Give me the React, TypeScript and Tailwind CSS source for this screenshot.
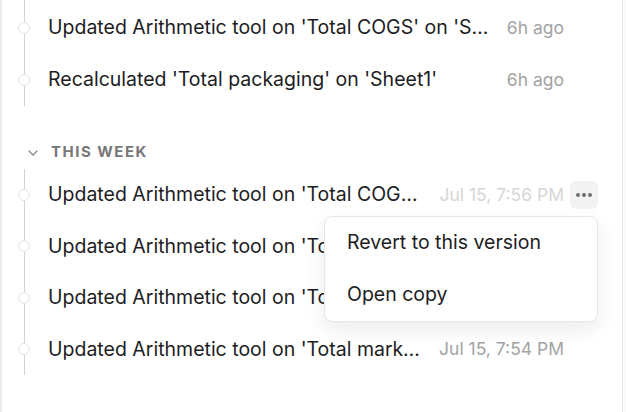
import { ChevronDown } from "lucide-react";

type Entry = { text: string; time: string; active?: boolean };

const today: Entry[] = [
  { text: "Updated Arithmetic tool on 'Total COGS' on 'Sheet1'", time: "6h ago" },
  { text: "Recalculated 'Total packaging' on 'Sheet1'", time: "6h ago" },
];

const thisWeek: Entry[] = [
  { text: "Updated Arithmetic tool on 'Total COGS' on 'Sheet1'", time: "Jul 15, 7:56 PM", active: true },
  { text: "Updated Arithmetic tool on 'Total packaging' on 'Sheet1'", time: "Jul 15, 7:55 PM" },
  { text: "Updated Arithmetic tool on 'Total shipping' on 'Sheet1'", time: "Jul 15, 7:55 PM" },
  { text: "Updated Arithmetic tool on 'Total marketing' on 'Sheet1'", time: "Jul 15, 7:54 PM" },
];

function Row({ entry, height }: { entry: Entry; height: string }) {
  return (
    <li className={`relative flex items-center pl-[23px] pr-6 ${height}`}>
      <span className="absolute -left-[7px] top-1/2 h-3 w-3 -translate-y-1/2 rounded-full border border-[#e3e3e3] bg-white" />
      <span className="min-w-0 flex-1 truncate text-[19.5px] text-[#1d1d1f]">{entry.text}</span>
      <span
        className={`ml-4 shrink-0 text-[17.5px] ${entry.active ? "text-[#d6d6d6]" : "text-[#a3a3a3]"}`}
      >
        {entry.time}
      </span>
      <div className="relative ml-[6px] shrink-0">
        <button
          className={`flex h-7 w-7 items-center justify-center gap-[2px] rounded-md ${
            entry.active ? "bg-[#f2f2f2]" : "opacity-0"
          }`}
        >
          <span className="h-[4px] w-[4px] rounded-full bg-[#6e6e6e]" />
          <span className="h-[4px] w-[4px] rounded-full bg-[#6e6e6e]" />
          <span className="h-[4px] w-[4px] rounded-full bg-[#6e6e6e]" />
        </button>
        {entry.active && (
          <div className="absolute right-0 top-[35px] z-10 w-[274px] rounded-lg border border-[#e6e6e6] bg-white shadow-[0_8px_20px_rgba(0,0,0,0.08)]">
            <div className="flex h-[52px] items-center px-[22px] text-[19.5px] text-[#1d1d1f]">
              Revert to this version
            </div>
            <div className="flex h-[52px] items-center px-[22px] text-[19.5px] text-[#1d1d1f]">
              Open copy
            </div>
          </div>
        )}
      </div>
    </li>
  );
}

export default function App() {
  return (
    <div className="h-[412px] w-[626px] overflow-hidden bg-[#fafafa] font-['Inter',sans-serif] antialiased">
      <div className="h-full w-[623px] border-l-2 border-r border-l-[#ececec] border-r-[#e8e8e8] bg-white">
        <ul className="ml-[22px] border-l border-[#d2d2d2] pt-[2px]">
          {today.map((e, i) => (
            <Row key={i} entry={e} height="h-[52px]" />
          ))}
        </ul>

        <div className="flex h-[63px] items-center gap-[10px] pl-[23px] pt-[30px]">
          <ChevronDown size={16} strokeWidth={2} className="text-[#8a8a8a]" />
          <span className="text-[15px] font-bold uppercase tracking-[0.1em] text-[#777777]">
            This week
          </span>
        </div>

        <ul className="ml-[22px] border-l border-[#d2d2d2]">
          {thisWeek.map((e, i) => (
            <Row key={i} entry={e} height="h-[51.5px]" />
          ))}
        </ul>
      </div>
    </div>
  );
}
